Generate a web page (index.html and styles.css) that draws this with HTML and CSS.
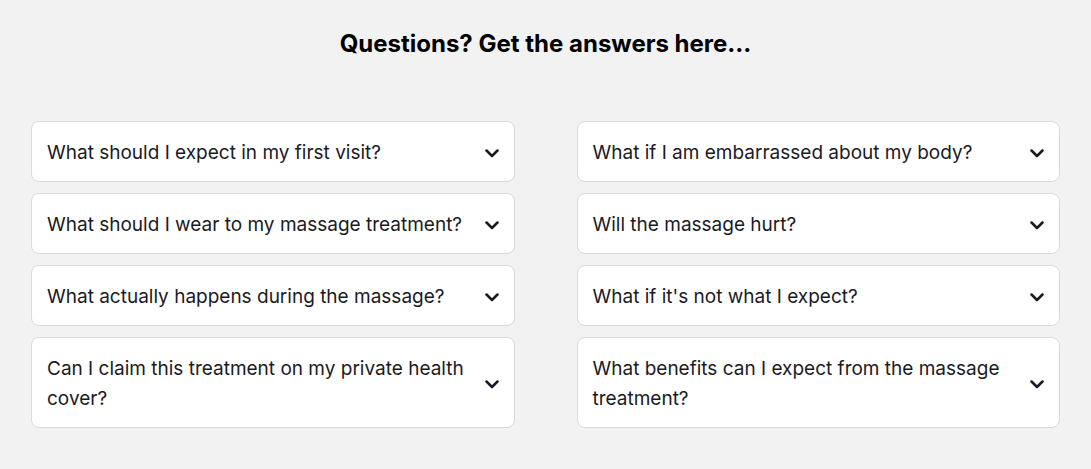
FILE: index.html
```html
<!DOCTYPE html>
<html lang="en">
<head>
    <meta charset="UTF-8">
    <meta name="viewport" content="width=device-width, initial-scale=1.0">
    <title>FAQ</title>
    <link rel="stylesheet" href="styles.css">
</head>
<body>
    <section class="faq">
        <h2>Questions? Get the answers here...</h2>

        <div class="faq-grid">
            <div class="faq-col">
                <div class="faq-item">
                    <span class="faq-question">What should I expect in my first visit?</span>
                    <svg class="chevron" viewBox="0 0 14 14"><path d="M1.5 4.5L7 10l5.5-5.5"/></svg>
                </div>
                <div class="faq-item">
                    <span class="faq-question">What should I wear to my massage treatment?</span>
                    <svg class="chevron" viewBox="0 0 14 14"><path d="M1.5 4.5L7 10l5.5-5.5"/></svg>
                </div>
                <div class="faq-item">
                    <span class="faq-question">What actually happens during the massage?</span>
                    <svg class="chevron" viewBox="0 0 14 14"><path d="M1.5 4.5L7 10l5.5-5.5"/></svg>
                </div>
                <div class="faq-item">
                    <span class="faq-question">Can I claim this treatment on my private health cover?</span>
                    <svg class="chevron" viewBox="0 0 14 14"><path d="M1.5 4.5L7 10l5.5-5.5"/></svg>
                </div>
            </div>
            <div class="faq-col">
                <div class="faq-item">
                    <span class="faq-question">What if I am embarrassed about my body?</span>
                    <svg class="chevron" viewBox="0 0 14 14"><path d="M1.5 4.5L7 10l5.5-5.5"/></svg>
                </div>
                <div class="faq-item">
                    <span class="faq-question">Will the massage hurt?</span>
                    <svg class="chevron" viewBox="0 0 14 14"><path d="M1.5 4.5L7 10l5.5-5.5"/></svg>
                </div>
                <div class="faq-item">
                    <span class="faq-question">What if it's not what I expect?</span>
                    <svg class="chevron" viewBox="0 0 14 14"><path d="M1.5 4.5L7 10l5.5-5.5"/></svg>
                </div>
                <div class="faq-item">
                    <span class="faq-question">What benefits can I expect from the massage treatment?</span>
                    <svg class="chevron" viewBox="0 0 14 14"><path d="M1.5 4.5L7 10l5.5-5.5"/></svg>
                </div>
            </div>
        </div>
    </section>
</body>
</html>
```

FILE: styles.css
```css
body {
    margin: 0;
    background-color: #f2f2f2;
    font-family: Inter, "Open Sans", sans-serif;
    color: #1a1a24;
}
.faq {
    padding: 29px 31px 40px;
}
.faq h2 {
    margin: 0 0 63px;
    text-align: center;
    font-size: 24px;
    line-height: 29px;
    font-weight: 700;
    color: #000;
}
.faq-grid {
    display: grid;
    grid-template-columns: 1fr 1fr;
    column-gap: 62px;
    align-items: start;
}
.faq-col {
    display: flex;
    flex-direction: column;
    gap: 11px;
}
.faq-item {
    display: flex;
    align-items: center;
    justify-content: space-between;
    gap: 12px;
    padding: 15.5px 15px 13.5px;
    background-color: #fff;
    border: 1px solid #d9d9de;
    border-radius: 8px;
    cursor: pointer;
}
.faq-question {
    font-size: 19px;
    line-height: 30px;
}
.chevron {
    flex-shrink: 0;
    width: 14px;
    height: 14px;
    fill: none;
    stroke: #1a1a24;
    stroke-width: 2.5;
    stroke-linecap: round;
    stroke-linejoin: round;
}
```
